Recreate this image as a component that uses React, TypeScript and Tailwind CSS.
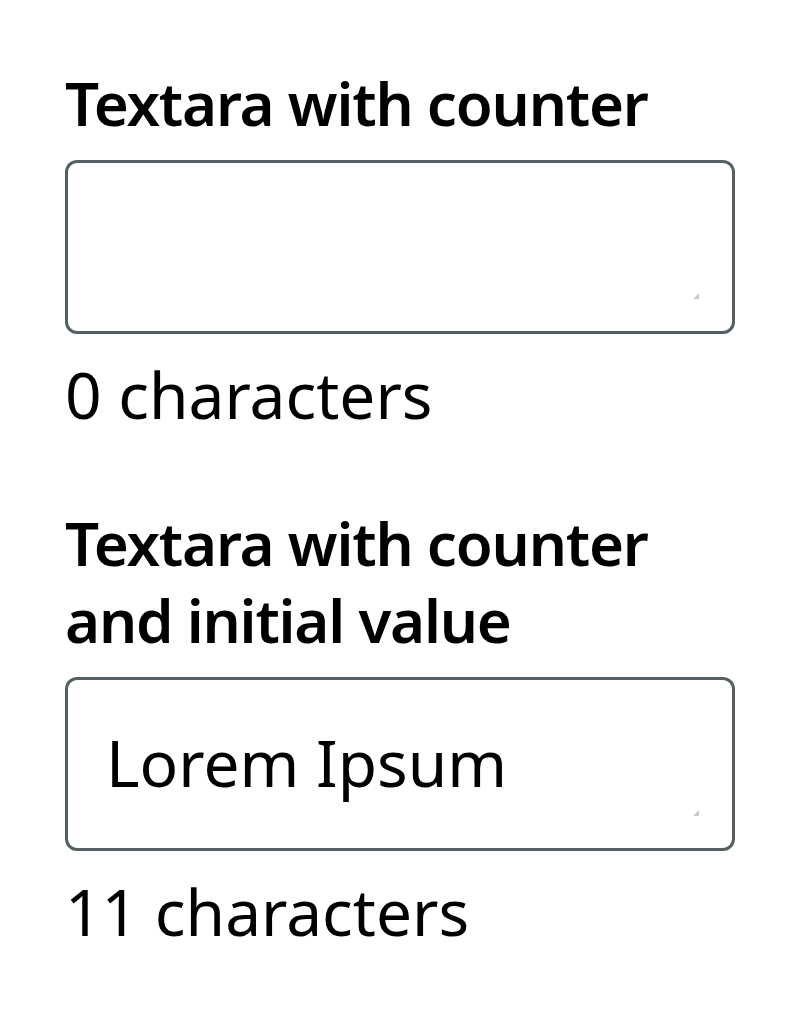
import React, { useState } from 'react';

function ResizeGrip() {
  return (
    <svg className="pointer-events-none absolute bottom-[32px] right-[33px]" width="6" height="6" viewBox="0 0 6 6">
      <path d="M6 0 L6 6 L0 6 Z" fill="#c9c9c9" />
    </svg>
  );
}

function CounterField({ label, initial = '' }: { label: React.ReactNode; initial?: string }) {
  const [value, setValue] = useState(initial);

  return (
    <div className="flex flex-col">
      <label className="font-semibold text-[60px] leading-[77px] tracking-[-1.2px] text-black">{label}</label>
      <div className="relative mt-[18px] h-[174px] rounded-[12px] border-[3px] border-[#566064] bg-white pl-[38px] pr-[32px] pt-[35px]">
        <textarea
          value={value}
          onChange={(e) => setValue(e.target.value)}
          className="block h-[101px] w-full resize-none bg-transparent p-0 text-[64px] leading-[96px] text-black outline-none"
          style={{ fontFamily: '"Noto Sans", sans-serif' }}
        />
        <ResizeGrip />
      </div>
      <p className="mt-[13px] text-[64px] leading-[96px] text-black">{value.length} characters</p>
    </div>
  );
}

export default function App() {
  return (
    <div
      className="min-h-[1019px] bg-white px-[65px] pt-[65px]"
      style={{ fontFamily: '"Noto Sans", sans-serif' }}
    >
      <div className="flex flex-col gap-[62px]">
        <CounterField label="Textara with counter" />
        <CounterField label={<>Textara with counter<br />and initial value</>} initial="Lorem Ipsum" />
      </div>
    </div>
  );
}
